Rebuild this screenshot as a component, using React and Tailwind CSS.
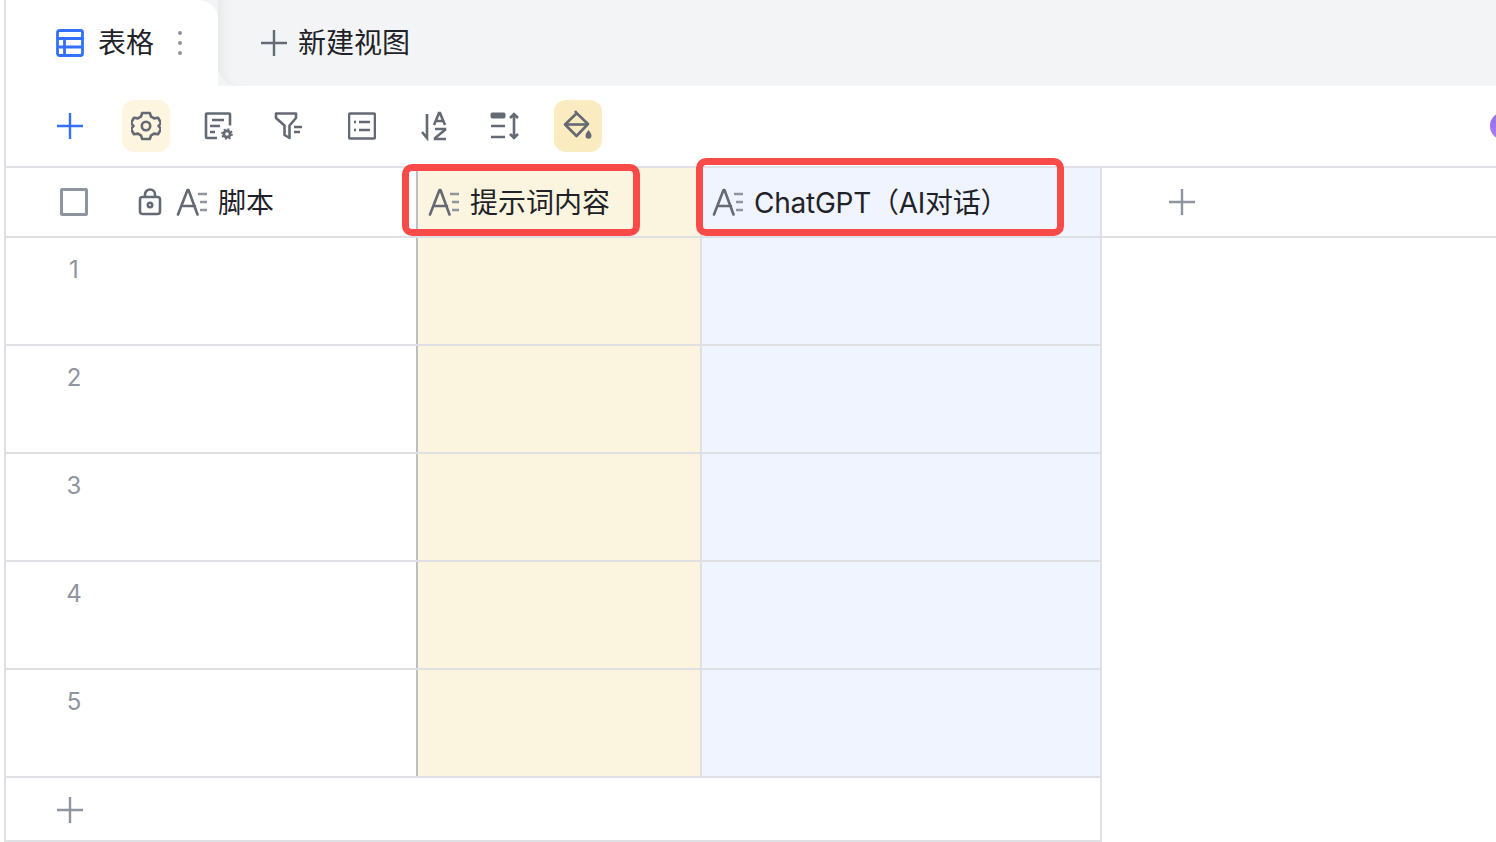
import React from 'react'

const Plus = ({ className = '' }) => (
  <svg width="28" height="28" viewBox="0 0 28 28" className={className} fill="none" stroke="currentColor" strokeWidth="2.4">
    <path d="M1 14h26M14 1v26" />
  </svg>
)

// the "A=" text field glyph used in every column header
const TextField = () => (
  <svg width="32" height="28" viewBox="0 0 32 28" fill="none" stroke="#646a73" strokeWidth="2.6" className="shrink-0">
    <path d="M2 26.500 11.500 2h1L21.500 26.500M6 18h13" strokeLinecap="round" strokeLinejoin="round" />
    <path d="M22 6h9M24 14h7M24 22h7" stroke="#8f959e" />
  </svg>
)

const Grid = () => (
  <svg width="28" height="28" viewBox="0 0 28 28" fill="none" stroke="#3370ff" strokeWidth="2.800">
    <rect x="1.500" y="1.500" width="25" height="25" rx="2" />
    <path d="M2 9.500h24M2 18h24M8.500 9.500V26" />
  </svg>
)

const Gear = () => (
  <svg width="30" height="30" viewBox="0 0 30 30" fill="none" stroke="#646a73" strokeWidth="2.600" strokeLinejoin="round">
    <path d="M11.200 2h7.600l1.300 3.700 3 1.700 3.900-.7 3 5.300-2.500 3 2.500 3-3 5.300-3.900-.7-3 1.700-1.300 3.700h-7.600l-1.300-3.700-3-1.700-3.900.7-3-5.300 2.500-3-2.500-3 3-5.300 3.900.7 3-1.700z" />
    <circle cx="15" cy="15" r="4.200" />
  </svg>
)

const FormSetting = () => (
  <svg width="30" height="28" viewBox="0 0 30 28" fill="none" stroke="#646a73" strokeWidth="2.600">
    <path d="M13 26H3a1 1 0 0 1-1-1V2.500a1 1 0 0 1 1-1h22a1 1 0 0 1 1 1v11" />
    <path d="M8 8h12M6 14h10M6 20h5" />
    <circle cx="23" cy="22" r="3.200" strokeWidth="2.800" />
    <circle cx="23" cy="22" r="5" strokeWidth="1.600" strokeDasharray="2 1.900" />
  </svg>
)

const FunnelList = () => (
  <svg width="30" height="28" viewBox="0 0 30 28" fill="none" stroke="#646a73" strokeWidth="2.600" strokeLinejoin="round">
    <path d="M2 1.500h20v4.500l-6.500 7.500V26l-5-3v-9.500L2 6z" />
    <path d="M20 15h8M20 20h6" />
  </svg>
)

const ListBox = () => (
  <svg width="28" height="28" viewBox="0 0 28 28" fill="none" stroke="#646a73" strokeWidth="2.600">
    <rect x="1" y="1.500" width="26" height="25" rx="1.500" />
    <path d="M11 10h11M11 18h11M6 10h2M6 18h2" />
  </svg>
)

const SortAz = () => (
  <svg width="28" height="30" viewBox="0 0 28 30" fill="none" stroke="#646a73" strokeWidth="2.600">
    <path d="M6 3v24L1 21" />
    <path d="M13 14 18 2h1l5 12M15 10h7M14 18h10v1l-10 8v1h11" />
  </svg>
)

const RowHeight = () => (
  <svg width="32" height="28" viewBox="0 0 32 28" fill="none" stroke="#646a73" strokeWidth="2.600">
    <rect x="1" y="1" width="14" height="5" fill="#646a73" strokeWidth="1" rx="1" />
    <path d="M1 14h14M1 25h14M24 2v24M20 6l4-4 4 4M20 22l4 4 4-4" />
  </svg>
)

const Bucket = () => (
  <svg width="30" height="32" viewBox="0 0 30 32" fill="none" stroke="#646a73" strokeWidth="2.600" strokeLinejoin="round">
    <path d="M12 1l2 2.500L25 14 13.500 26 2 14.500 14 3" />
    <path d="M2 14.500h23" />
    <path d="M25.500 20c-2 2.800-3 4.200-3 5.700a3 3 0 0 0 6 0c0-1.500-1-2.900-3-5.700z" fill="#646a73" stroke="none" />
  </svg>
)

const Lock = () => (
  <svg width="24" height="28" viewBox="0 0 24 28" fill="none" stroke="#646a73" strokeWidth="2.600">
    <rect x="2" y="9" width="20" height="17" rx="2.500" />
    <path d="M7 9V6.500a5 5 0 0 1 10 0V9" />
    <circle cx="12" cy="17" r="2.200" />
  </svg>
)

const rows = [1, 2, 3, 4, 5]

export default function App() {
  return (
    <div className="relative w-[1496px] h-[842px] overflow-hidden bg-white text-[#1f2329] font-['Inter','Noto_Sans_CJK_SC',sans-serif]">
      <div className="ml-1 h-full flex flex-col border-l-2 border-[#dee0e3]">
        {/* tabs */}
        <div className="flex h-[86px] shrink-0 bg-[#f3f4f6]">
          <div className="flex w-[212px] items-center rounded-tr-[20px] bg-white pl-[50px]">
            <Grid />
            <span className="ml-[14px] text-[28px] leading-none">表格</span>
            <div className="ml-6 flex flex-col gap-[6px]">
              <span className="h-1 w-1 rounded-full bg-[#8f959e]" />
              <span className="h-1 w-1 rounded-full bg-[#8f959e]" />
              <span className="h-1 w-1 rounded-full bg-[#8f959e]" />
            </div>
          </div>
          <div className="flex flex-1 items-center rounded-bl-[20px] bg-[#f3f4f6] pl-[42px] shadow-[inset_14px_0_10px_-10px_#e6e7ea]">
            <Plus className="text-[#646a73]" />
            <span className="ml-[10px] text-[28px] leading-none">新建视图</span>
          </div>
        </div>

        {/* toolbar */}
        <div className="flex h-20 shrink-0 items-center pl-[50px]">
          <Plus className="text-[#3370ff]" />
          <div className="ml-[38px] flex h-[52px] w-12 items-center justify-center rounded-xl bg-[#fdf5e0]"><Gear /></div>
          <div className="ml-[34px] flex w-[30px] justify-center"><FormSetting /></div>
          <div className="ml-[40px] flex w-[30px] justify-center"><FunnelList /></div>
          <div className="ml-[44px] flex w-7 justify-center"><ListBox /></div>
          <div className="ml-[45px] flex w-7 justify-center"><SortAz /></div>
          <div className="ml-[41px] flex w-8 justify-center"><RowHeight /></div>
          <div className="ml-[32px] flex h-[52px] w-12 items-center justify-center rounded-xl bg-[#faecc0]"><Bucket /></div>
          <div className="ml-auto -mr-[22px] h-7 w-7 rounded-full bg-gradient-to-br from-[#8f6bf0] to-[#c58cf0]" />
        </div>

        {/* header */}
        <div className="flex h-[72px] shrink-0 border-y-2 border-[#dee0e3]">
          <div className="flex w-[412px] items-center border-r-2 border-[#bbbfc4]">
            <div className="ml-[54px] h-7 w-7 rounded-[2px] border-[3px] border-[#8f959e]" />
            <div className="ml-[50px] flex items-center"><Lock /></div>
            <div className="ml-[14px]"><TextField /></div>
            <span className="ml-[10px] mt-[2px] text-[28px] leading-none">脚本</span>
          </div>
          <div className="flex w-[284px] items-center border-r-2 border-[#dee0e3] bg-[#fbf4de] pl-[10px]">
            <TextField />
            <span className="ml-[10px] mt-[2px] text-[28px] leading-none">提示词内容</span>
          </div>
          <div className="flex w-[400px] items-center border-r-2 border-[#dee0e3] bg-[#f0f4ff] pl-[10px]">
            <TextField />
            <span className="ml-[10px] mt-[2px] text-[28px] leading-none tracking-[-0.25px]">ChatGPT（AI对话）</span>
          </div>
          <div className="flex flex-1 items-center pl-[66px]">
            <Plus className="text-[#8f959e]" />
          </div>
        </div>

        {/* rows */}
        {rows.map((n) => (
          <div key={n} className="flex h-[108px] w-[1096px] shrink-0 border-b-2 border-[#dee0e3]">
            <div className="w-[412px] border-r-2 border-[#bbbfc4] pt-4 text-2xl leading-8 text-[#8f959e]">
              <div className="w-[136px] text-center">{n}</div>
            </div>
            <div className="w-[284px] border-r-2 border-[#dee0e3] bg-[#fbf4de]" />
            <div className="flex-1 border-r-2 border-[#dee0e3] bg-[#f0f4ff]" />
          </div>
        ))}

        {/* add row */}
        <div className="flex h-[64px] w-[1096px] shrink-0 items-center border-b-2 border-r-2 border-[#dee0e3] pl-[50px] pt-[2px]">
          <Plus className="text-[#8f959e]" />
        </div>
      </div>

      {/* red highlight boxes drawn over the sheet */}
      <div className="absolute left-[402px] top-[164px] h-[72px] w-[238px] rounded-[10px] border-[7px] border-[#f84a48]" />
      <div className="absolute left-[696px] top-[158px] h-[78px] w-[368px] rounded-[10px] border-[7px] border-[#f84a48]" />
    </div>
  )
}
